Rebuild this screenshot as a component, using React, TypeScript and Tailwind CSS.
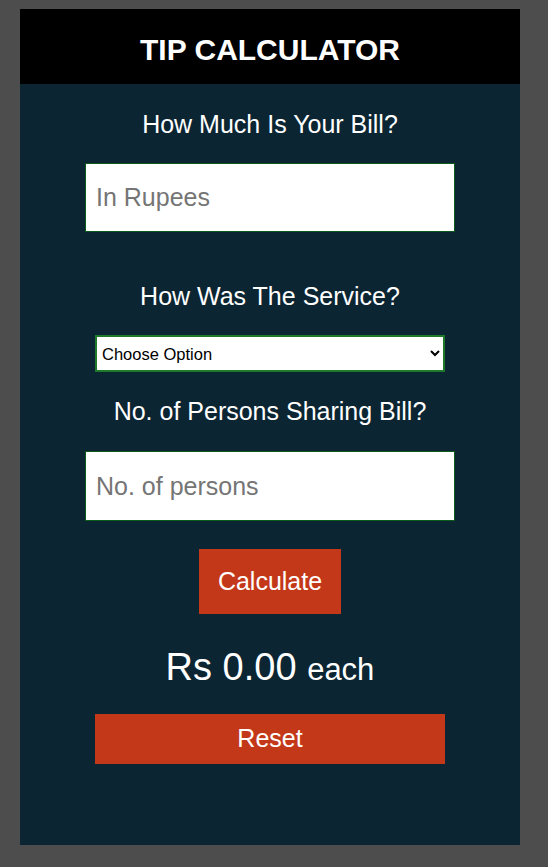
export default function App() {
  return (
    <div className="min-h-[867px] bg-[#4d4d4d] pt-[9px] font-['Liberation_Sans',Arial,sans-serif]">
      <div className="ml-[20px] w-[500px] bg-[#0b2533]">
        <header className="flex h-[75px] items-center justify-center bg-black pt-[6px]">
          <h1 className="text-[30px] font-bold text-white">TIP CALCULATOR</h1>
        </header>

        <div className="flex h-[761px] flex-col items-center text-white">
          <p className="mt-[25px] text-[25px] leading-[30px]">How Much Is Your Bill?</p>
          <input
            type="text"
            placeholder="In Rupees"
            className="mt-[24px] h-[69px] w-[370px] border border-[#0a5a1a] bg-white px-[10px] text-[25px] text-black placeholder:text-[#757575] outline-none"
          />

          <p className="mt-[49px] text-[25px] leading-[30px]">How Was The Service?</p>
          <select className="mt-[24px] h-[37px] w-[350px] border-2 border-[#1e7a2a] bg-white px-[1px] text-[16.5px] text-black">
            <option>Choose Option</option>
            <option>30% - Outstanding</option>
            <option>20% - Good</option>
            <option>15% - It was OK</option>
            <option>10% - Bad</option>
            <option>5% - Terrible</option>
          </select>

          <p className="mt-[24px] text-[25px] leading-[30px]">No. of Persons Sharing Bill?</p>
          <input
            type="text"
            placeholder="No. of persons"
            className="mt-[25px] h-[70px] w-[370px] border border-[#0a5a1a] bg-white px-[10px] text-[25px] text-black placeholder:text-[#757575] outline-none"
          />

          <button className="mt-[28px] h-[65px] w-[142px] bg-[#c4381a] text-[25px] text-white">
            Calculate
          </button>

          <p className="mt-[32px] leading-[42px]">
            <span className="text-[38px]">Rs 0.00 </span>
            <span className="text-[31px]">each</span>
          </p>

          <button className="mt-[18px] h-[50px] w-[350px] bg-[#c4381a] text-[25px] text-white">
            Reset
          </button>
        </div>
      </div>
    </div>
  )
}
